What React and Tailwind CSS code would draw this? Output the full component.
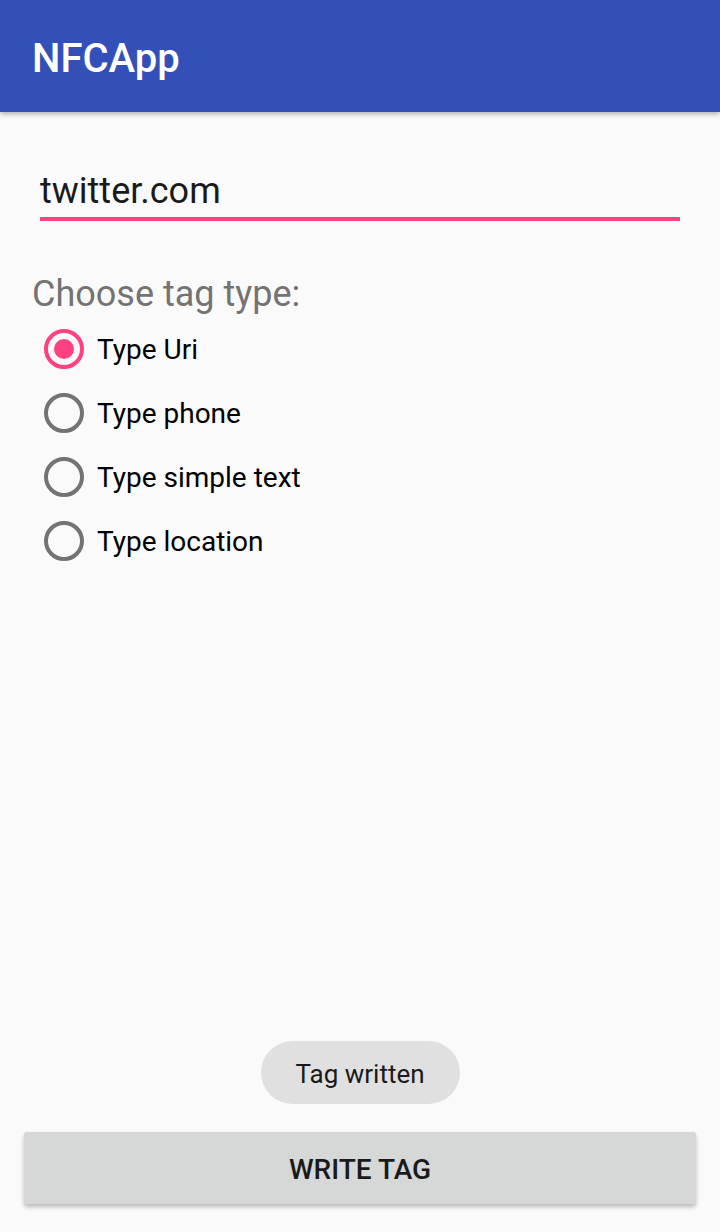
import { useState } from "react";

const options = ["Type Uri", "Type phone", "Type simple text", "Type location"];

const Radio = ({ checked }) => (
  <span
    className={`w-10 h-10 rounded-full border-4 flex items-center justify-center shrink-0 ${
      checked ? "border-[#ff4081]" : "border-[#737373]"
    }`}
  >
    {checked && <span className="w-5 h-5 rounded-full bg-[#ff4081]" />}
  </span>
);

export default function App() {
  const [selected, setSelected] = useState(0);

  return (
    <div className="h-[1232px] w-[720px] flex flex-col bg-[#fafafa] font-['Roboto','Liberation_Sans',sans-serif]">
      <header className="h-[112px] shrink-0 bg-[#3350b8] flex items-center px-8 shadow-[0_2px_5px_rgba(0,0,0,0.3)] relative z-10">
        <h1 className="text-[40px] font-medium text-white leading-none pt-[6px]">NFCApp</h1>
      </header>

      <main className="flex-1 flex flex-col px-8">
        <div className="mt-[58px] mx-2 border-b-4 border-[#ff4081]">
          <div className="text-[36px] leading-[42px] text-[#1a1a1a] pb-[5px]">twitter.com</div>
        </div>

        <p className="mt-[52px] text-[36px] leading-[42px] text-[#737373]">Choose tag type:</p>

        <div className="flex flex-col mt-[2px] ml-3">
          {options.map((label, i) => (
            <button
              key={label}
              onClick={() => setSelected(i)}
              className="h-16 flex items-center gap-[13px] text-left"
            >
              <Radio checked={selected === i} />
              <span className="text-[28px] text-black leading-none pt-[2px]">{label}</span>
            </button>
          ))}
        </div>

        <div className="flex-1" />

        <div className="flex justify-center">
          <div className="h-[63px] w-[199px] rounded-full bg-[#e0e0e0] flex items-center justify-center text-[26px] text-[#1a1a1a] pt-[3px]">
            Tag written
          </div>
        </div>

        <button className="mt-7 mb-[28px] -mx-2 h-[72px] rounded-[3px] bg-[#d6d7d7] text-[28px] font-medium text-[#1a1a1a] pt-[3px] shadow-[0_3px_4px_rgba(0,0,0,0.25)]">
          WRITE TAG
        </button>
      </main>
    </div>
  );
}
